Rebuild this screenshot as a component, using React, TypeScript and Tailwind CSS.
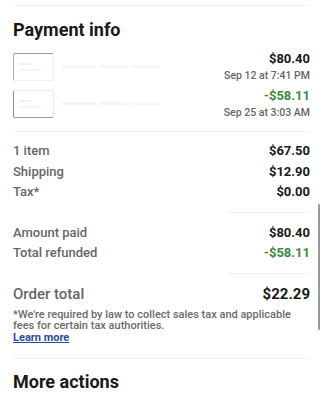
import React from "react";

function Row({ label, value, green }: { label: string; value: string; green?: boolean }) {
  return (
    <div className="flex justify-between items-center h-[20.5px] text-[13px] leading-[20px]">
      <span className="font-medium text-[#666666]">{label}</span>
      <span className={"font-bold " + (green ? "text-[#3a8a3f]" : "text-[#191919]")}>{value}</span>
    </div>
  );
}

function CardIcon({ dark }: { dark?: boolean }) {
  return (
    <div className="flex items-center gap-[8px]">
      <div
        className={
          "w-[41px] h-[28px] rounded-[2px] border flex flex-col justify-center gap-[4px] px-[5px] " +
          (dark ? "border-[#ececec] border-l-[#8a8a8a] border-b-[#9a9a9a]" : "border-[#f0f0f0] border-l-[#aaa] border-t-[#999]")
        }
      >
        <div className="h-[2px] w-[12px] bg-[#f2f2f2]" />
        <div className="h-[2px] w-[22px] bg-[#f5f5f5]" />
      </div>
      <div className="flex gap-[3px]">
        <div className="h-[3px] w-[34px] bg-[#f5f5f5]" />
        <div className="h-[3px] w-[28px] bg-[#f6f6f6]" />
        <div className="h-[3px] w-[30px] bg-[#f7f7f7]" />
      </div>
    </div>
  );
}

export default function App() {
  return (
    <div className="relative w-[323px] h-[400px] bg-white overflow-hidden font-['Roboto',sans-serif]">
      <div className="px-[13px] pt-[5px]">
        <div className="h-px bg-[#f0f0f0]" />
        <h1 className="mt-[10px] text-[18px] leading-[28px] font-bold text-[#191919]">Payment info</h1>

        <div className="mt-[5px] flex justify-between items-center">
          <CardIcon />
          <div className="flex flex-col items-end">
            <span className="text-[13px] leading-[19px] font-bold text-[#191919]">$80.40</span>
            <span className="text-[10.5px] leading-[16px] font-medium text-[#666666]">Sep 12 at 7:41 PM</span>
          </div>
        </div>
        <div className="mt-[2px] flex justify-between items-center">
          <CardIcon dark />
          <div className="flex flex-col items-end">
            <span className="text-[13px] leading-[19px] font-bold text-[#3a8a3f]">-$58.11</span>
            <span className="text-[10.5px] leading-[16px] font-medium text-[#666666]">Sep 25 at 3:03 AM</span>
          </div>
        </div>

        <div className="mt-[10px] h-px bg-[#f0f0f0]" />

        <div className="mt-[9px]">
          <Row label="1 item" value="$67.50" />
          <Row label="Shipping" value="$12.90" />
          <Row label="Tax*" value="$0.00" />
        </div>

        <div className="mt-[9px] ml-auto w-[82px] h-px bg-[#f0f0f0]" />

        <div className="mt-[10px]">
          <Row label="Amount paid" value="$80.40" />
          <Row label="Total refunded" value="-$58.11" green />
        </div>

        <div className="mt-[9px] ml-auto w-[82px] h-px bg-[#f0f0f0]" />

        <div className="mt-[9px] flex justify-between items-center h-[24px]">
          <span className="text-[15px] font-medium text-[#666666]">Order total</span>
          <span className="text-[15px] font-bold text-[#191919]">$22.29</span>
        </div>

        <p className="mt-[2px] text-[11px] leading-[11.5px] font-medium text-[#6b6b6b]">
          *We're required by law to collect sales tax and applicable fees for certain tax authorities.
        </p>
        <a className="block text-[11px] leading-[12px] font-bold text-[#2a4d9c] underline">Learn more</a>

        <div className="mt-[14px] h-px bg-[#f0f0f0]" />

        <h2 className="mt-[9px] text-[18px] leading-[28px] font-bold text-[#191919]">More actions</h2>
      </div>

      <div className="absolute left-[318px] top-[204px] w-[2px] h-[126px] bg-[#9a9a9a] rounded-full" />
    </div>
  );
}
